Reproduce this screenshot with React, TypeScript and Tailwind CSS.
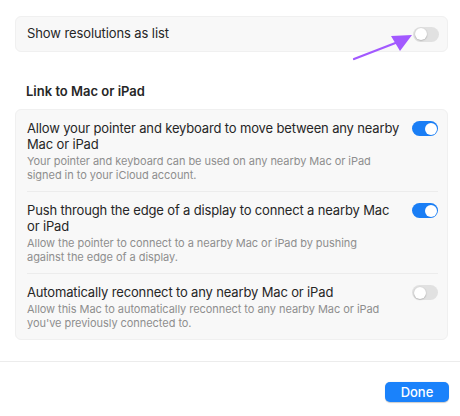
import React from "react";

function Toggle({ on }: { on: boolean }) {
  return on ? (
    <div className="w-[26px] h-[15px] rounded-full bg-[#1a7ef5] flex items-center justify-end px-[1.5px] shrink-0">
      <div className="w-[12px] h-[12px] rounded-full bg-white" />
    </div>
  ) : (
    <div className="w-[26px] h-[15px] rounded-full bg-[#e1e1e1] flex items-center px-[1.5px] shrink-0">
      <div className="w-[12px] h-[12px] rounded-full bg-white shadow-[0_0.5px_1.5px_rgba(0,0,0,0.3)]" />
    </div>
  );
}

function Row({
  title,
  desc,
  on,
  divider,
}: {
  title: string[];
  desc: string[];
  on: boolean;
  divider?: boolean;
}) {
  return (
    <div className="pl-[11px] pr-[9px]">
      <div className={`flex items-start justify-between gap-[4px] pt-[10px] pb-[9px] ${divider ? "border-b border-[#ececec]" : ""}`}>
        <div className="flex flex-col flex-1 min-w-0">
          <div className="text-[13px] leading-[16px] text-[#262626] tracking-[-0.15px]">
            {title.map((l, i) => (
              <div key={i} className="whitespace-nowrap">{l}</div>
            ))}
          </div>
          <div className="text-[11px] leading-[14px] text-[#8e8e8e] mt-[2px] tracking-[-0.05px]">
            {desc.map((l, i) => (
              <div key={i} className="whitespace-nowrap">{l}</div>
            ))}
          </div>
        </div>
        <div className="pt-[1px] shrink-0">
          <Toggle on={on} />
        </div>
      </div>
    </div>
  );
}

export default function App() {
  return (
    <div
      className="w-[460px] h-[416px] bg-white relative overflow-hidden flex flex-col"
      style={{ fontFamily: "Inter, 'Liberation Sans', sans-serif" }}
    >
      <div className="pl-[15px] pr-[12px] pt-[16px] flex flex-col">
        <div className="h-[36px] rounded-[6px] bg-[#f8f8f8] border border-[#f0f0f0] flex items-center justify-between pl-[11px] pr-[8px]">
          <span className="text-[13px] text-[#262626] tracking-[-0.1px]">Show resolutions as list</span>
          <Toggle on={false} />
        </div>

        <div className="text-[13px] font-semibold text-[#262626] pl-[11px] mt-[31px] mb-[10px] leading-[16px]">
          Link to Mac or iPad
        </div>

        <div className="rounded-[6px] bg-[#f8f8f8] border border-[#f0f0f0] flex flex-col">
          <Row
            title={["Allow your pointer and keyboard to move between any nearby", "Mac or iPad"]}
            desc={["Your pointer and keyboard can be used on any nearby Mac or iPad", "signed in to your iCloud account."]}
            on
            divider
          />
          <Row
            title={["Push through the edge of a display to connect a nearby Mac", "or iPad"]}
            desc={["Allow the pointer to connect to a nearby Mac or iPad by pushing", "against the edge of a display."]}
            on
            divider
          />
          <Row
            title={["Automatically reconnect to any nearby Mac or iPad"]}
            desc={["Allow this Mac to automatically reconnect to any nearby Mac or iPad", "you've previously connected to."]}
            on={false}
          />
        </div>
      </div>

      <div className="mt-[21px] border-t border-[#ececec] flex justify-end px-[11px] pt-[20px]">
        <button className="w-[64px] h-[20px] rounded-[5px] bg-[#1a82fb] text-white text-[13px] leading-[20px] font-medium shadow-[0_0.5px_1px_rgba(0,0,0,0.2)]">
          Done
        </button>
      </div>

      <svg className="absolute left-0 top-0 pointer-events-none" width="460" height="416">
        <line x1="354" y1="59" x2="398" y2="42" stroke="#a259ff" strokeWidth="2.2" strokeLinecap="round" />
        <polygon points="412,35 391,36 400,51" fill="#a259ff" />
      </svg>
    </div>
  );
}
